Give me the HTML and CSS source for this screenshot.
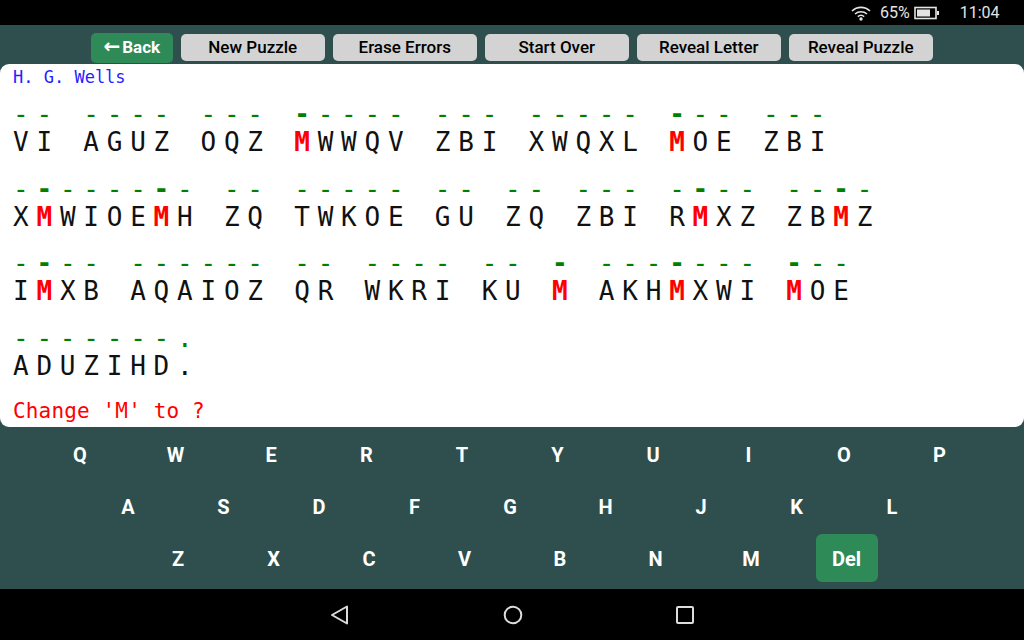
FILE: index.html
```html
<!DOCTYPE html>
<html lang="en">
<head>
    <meta charset="UTF-8">
    <title>Cryptogram</title>
    <link rel="stylesheet" href="styles.css">
</head>
<body>
<div class="status-bar">
    <svg class="wifi" width="20" height="16" viewBox="0 0 20 16">
        <path d="M1 6 A13 13 0 0 1 19 6" fill="none" stroke="#e4e4e4" stroke-width="1.6"/>
        <path d="M4 9 A9 9 0 0 1 16 9" fill="none" stroke="#e4e4e4" stroke-width="1.6"/>
        <path d="M6.8 11.6 A5 5 0 0 1 13.2 11.6" fill="none" stroke="#e4e4e4" stroke-width="1.6"/>
        <circle cx="10" cy="14" r="1.7" fill="#e4e4e4"/>
    </svg>
    <span class="pct">65%</span>
    <svg class="battery" width="26" height="14" viewBox="0 0 26 14">
        <rect x="1" y="1.5" width="21" height="11" fill="none" stroke="#e4e4e4" stroke-width="1.6"/>
        <rect x="3" y="3.5" width="13" height="7" fill="#e4e4e4"/>
        <rect x="23" y="5" width="2" height="4" fill="#e4e4e4"/>
    </svg>
    <span class="clock">11:04</span>
</div>

<div class="toolbar">
    <button class="button back"><span class="arrow">←</span>Back</button>
    <button class="button">New Puzzle</button>
    <button class="button">Erase Errors</button>
    <button class="button">Start Over</button>
    <button class="button">Reveal Letter</button>
    <button class="button">Reveal Puzzle</button>
</div>

<div class="puzzle">
    <div class="author">H. G. Wells</div>
    <div class="lines">
        <div class="guess">-- ---- --- <b>-</b>---- --- ----- <b>-</b>-- ---</div>
        <div class="cipher">VI AGUZ OQZ <b>M</b>WWQV ZBI XWQXL <b>M</b>OE ZBI</div>
        <div class="guess">-<b>-</b>----<b>-</b>- -- ----- -- -- --- -<b>-</b>-- --<b>-</b>-</div>
        <div class="cipher">X<b>M</b>WIOE<b>M</b>H ZQ TWKOE GU ZQ ZBI R<b>M</b>XZ ZB<b>M</b>Z</div>
        <div class="guess">-<b>-</b>-- ------ -- ---- -- <b>-</b> ---<b>-</b>--- <b>-</b>--</div>
        <div class="cipher">I<b>M</b>XB AQAIOZ QR WKRI KU <b>M</b> AKH<b>M</b>XWI <b>M</b>OE</div>
        <div class="guess">-------.</div>
        <div class="cipher">ADUZIHD.</div>
    </div>
    <div class="prompt">Change 'M' to ?</div>
</div>

<div class="keyboard">
    <div class="key-row row1">
        <div class="key">Q</div><div class="key">W</div><div class="key">E</div><div class="key">R</div><div class="key">T</div>
        <div class="key">Y</div><div class="key">U</div><div class="key">I</div><div class="key">O</div><div class="key">P</div>
    </div>
    <div class="key-row row2">
        <div class="key">A</div><div class="key">S</div><div class="key">D</div><div class="key">F</div><div class="key">G</div>
        <div class="key">H</div><div class="key">J</div><div class="key">K</div><div class="key">L</div>
    </div>
    <div class="key-row row3">
        <div class="key">Z</div><div class="key">X</div><div class="key">C</div><div class="key">V</div>
        <div class="key">B</div><div class="key">N</div><div class="key">M</div><div class="key del">Del</div>
    </div>
</div>

<div class="nav-bar">
    <svg width="20" height="22" viewBox="0 0 20 22">
        <path d="M2 11 L17 2.5 V19.5 Z" fill="none" stroke="#dcdcdc" stroke-width="2" stroke-linejoin="round"/>
    </svg>
    <svg width="20" height="20" viewBox="0 0 20 20">
        <circle cx="10" cy="10" r="8.3" fill="none" stroke="#dcdcdc" stroke-width="2"/>
    </svg>
    <svg width="18" height="18" viewBox="0 0 18 18">
        <rect x="1" y="1" width="16" height="16" rx="1" fill="none" stroke="#dcdcdc" stroke-width="2"/>
    </svg>
</div>
</body>
</html>
```

FILE: styles.css
```css
body {
    margin: 0;
    width: 1024px;
    height: 640px;
    overflow: hidden;
    display: flex;
    flex-direction: column;
    background-color: #2f4f4f;
    font-family: Roboto, sans-serif;
}
.status-bar {
    height: 25px;
    background: #000;
    color: #e4e4e4;
    display: flex;
    align-items: center;
    font-size: 16px;
    padding-left: 851px;
}
.pct {
    margin-left: 9px;
}
.battery {
    margin-left: 4px;
}
.clock {
    margin-left: 20px;
}
.toolbar {
    height: 39px;
    box-sizing: border-box;
    display: flex;
    align-items: center;
    padding: 6px 0 0 91px;
    gap: 8.5px;
}
.button {
    width: 143.5px;
    height: 27px;
    padding: 0 0 2px;
    border: none;
    border-radius: 5px;
    background-color: #d3d3d3;
    color: #000;
    font-family: Roboto, sans-serif;
    font-size: 17px;
    font-weight: 500;
}
.back {
    width: 81.5px;
    height: 30px;
    background-color: #2e8b57;
    color: #fff;
    font-weight: 700;
}
.arrow {
    font-family: "DejaVu Sans", sans-serif;
    font-size: 20px;
    line-height: 1;
    margin-right: 2px;
}
.puzzle {
    height: 363px;
    background: #fff;
    border-radius: 9px;
    font-family: "DejaVu Sans Mono", monospace;
    padding: 0 13px;
    box-sizing: border-box;
}
.author {
    height: 24px;
    line-height: 26px;
    color: #1f1fff;
    font-size: 17px;
}
.lines {
    height: 311px;
    padding-top: 12px;
    box-sizing: border-box;
    font-size: 26px;
    letter-spacing: 7.78px;
}
.guess {
    height: 28px;
    line-height: 29px;
    white-space: pre;
    color: #008000;
}
.cipher {
    height: 28px;
    line-height: 28px;
    margin-bottom: 18.5px;
    white-space: pre;
    color: #111;
}
.cipher b {
    color: #ff0000;
}
.prompt {
    color: #ff0000;
    font-size: 21px;
    letter-spacing: 0.15px;
    line-height: 24px;
}
.keyboard {
    height: 162px;
    display: flex;
    flex-direction: column;
    gap: 4px;
    padding-top: 3px;
    box-sizing: border-box;
}
.key-row {
    display: flex;
    gap: 33.5px;
}
.row1 {
    padding-left: 49px;
}
.row2 {
    padding-left: 97px;
}
.row3 {
    padding-left: 147px;
}
.key {
    width: 62px;
    height: 48px;
    box-sizing: border-box;
    padding-top: 2px;
    border-radius: 6px;
    display: flex;
    align-items: center;
    justify-content: center;
    color: #fff;
    font-size: 20px;
    font-weight: 700;
}
.del {
    background-color: #2e8b57;
}
.nav-bar {
    height: 51px;
    background: #000;
    display: flex;
    align-items: center;
    padding-left: 330px;
    gap: 153px;
}
```
